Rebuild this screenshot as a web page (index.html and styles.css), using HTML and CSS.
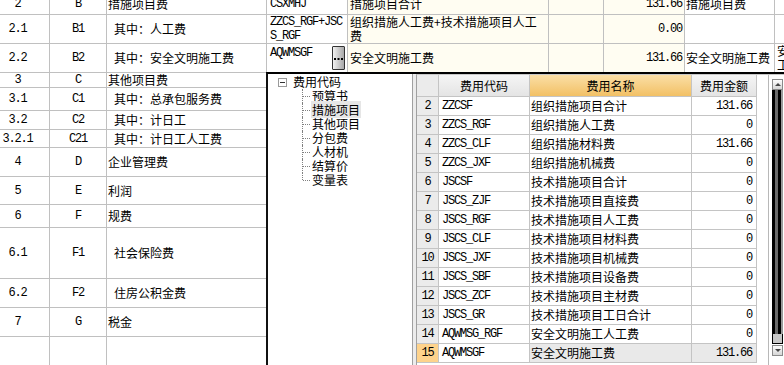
FILE: index.html
```html
<!DOCTYPE html>
<html lang="zh-CN">
<head>
<meta charset="utf-8">
<title>费用汇总</title>
<link rel="stylesheet" href="styles.css">
</head>
<body>
<div class="sheet">
  <div class="row h22">
    <div class="c ctr m">2</div><div class="c ctr m">B</div><div class="c">措施项目费</div>
    <div class="c m">CSXMHJ</div><div class="c cream">措施项目合计</div><div class="c cream"></div><div class="c cream num m">131.66</div><div class="c">措施项目费</div><div class="c"></div>
  </div>
  <div class="row h29">
    <div class="c ctr m">2.1</div><div class="c ctr m">B1</div><div class="c ind">其中：人工费</div>
    <div class="c m">ZZCS_RGF+JSC<br>S_RGF</div><div class="c cream">组织措施人工费+技术措施项目人工<br>费</div><div class="c cream"></div><div class="c cream num m">0.00</div><div class="c"></div><div class="c"></div>
  </div>
  <div class="row h29">
    <div class="c ctr m">2.2</div><div class="c ctr m">B2</div><div class="c ind">其中：安全文明施工费</div>
    <div class="c edit"><span class="m">AQWMSGF</span><span class="dots"><svg width="9" height="3" viewBox="0 0 9 3"><rect x="0" y="0" width="2" height="2" fill="#000"/><rect x="3.5" y="0" width="2" height="2" fill="#000"/><rect x="7" y="0" width="2" height="2" fill="#000"/></svg></span></div><div class="c cream">安全文明施工费</div><div class="c cream"></div><div class="c cream num m">131.66</div><div class="c">安全文明施工费</div><div class="c wrap">安全文明施工费</div>
  </div>
  <div class="row h15">
    <div class="c ctr m">3</div><div class="c ctr m">C</div><div class="c">其他项目费</div>
    <div class="c"></div><div class="c"></div><div class="c"></div><div class="c"></div><div class="c"></div><div class="c"></div>
  </div>
  <div class="row h23">
    <div class="c ctr m">3.1</div><div class="c ctr m">C1</div><div class="c ind">其中：总承包服务费</div>
    <div class="c"></div><div class="c"></div><div class="c"></div><div class="c"></div><div class="c"></div><div class="c"></div>
  </div>
  <div class="row h19">
    <div class="c ctr m">3.2</div><div class="c ctr m">C2</div><div class="c ind">其中：计日工</div>
    <div class="c"></div><div class="c"></div><div class="c"></div><div class="c"></div><div class="c"></div><div class="c"></div>
  </div>
  <div class="row h18">
    <div class="c ctr m">3.2.1</div><div class="c ctr m">C21</div><div class="c ind">其中：计日工人工费</div>
    <div class="c"></div><div class="c"></div><div class="c"></div><div class="c"></div><div class="c"></div><div class="c"></div>
  </div>
  <div class="row h29">
    <div class="c ctr m">4</div><div class="c ctr m">D</div><div class="c">企业管理费</div>
    <div class="c"></div><div class="c"></div><div class="c"></div><div class="c"></div><div class="c"></div><div class="c"></div>
  </div>
  <div class="row h28">
    <div class="c ctr m">5</div><div class="c ctr m">E</div><div class="c">利润</div>
    <div class="c"></div><div class="c"></div><div class="c"></div><div class="c"></div><div class="c"></div><div class="c"></div>
  </div>
  <div class="row h23">
    <div class="c ctr m">6</div><div class="c ctr m">F</div><div class="c">规费</div>
    <div class="c"></div><div class="c"></div><div class="c"></div><div class="c"></div><div class="c"></div><div class="c"></div>
  </div>
  <div class="row h51">
    <div class="c ctr m">6.1</div><div class="c ctr m">F1</div><div class="c ind">社会保险费</div>
    <div class="c"></div><div class="c"></div><div class="c"></div><div class="c"></div><div class="c"></div><div class="c"></div>
  </div>
  <div class="row h29">
    <div class="c ctr m">6.2</div><div class="c ctr m">F2</div><div class="c ind">住房公积金费</div>
    <div class="c"></div><div class="c"></div><div class="c"></div><div class="c"></div><div class="c"></div><div class="c"></div>
  </div>
  <div class="row h29">
    <div class="c ctr m">7</div><div class="c ctr m">G</div><div class="c">税金</div>
    <div class="c"></div><div class="c"></div><div class="c"></div><div class="c"></div><div class="c"></div><div class="c"></div>
  </div>
  <div class="row h70">
    <div class="c ctr m">8</div><div class="c ctr m">H</div><div class="c ind">工程造价</div>
    <div class="c"></div><div class="c"></div><div class="c"></div><div class="c"></div><div class="c"></div><div class="c"></div>
  </div>
</div>

<div class="popup">
  <div class="tree">
    <div class="root"><span class="minus"></span><span>费用代码</span></div>
    <ul class="kids">
      <li><span>预算书</span></li>
      <li class="sel"><span>措施项目</span></li>
      <li><span>其他项目</span></li>
      <li><span>分包费</span></li>
      <li><span>人材机</span></li>
      <li><span>结算价</span></li>
      <li><span>变量表</span></li>
    </ul>
  </div>
  <div class="gridwrap">
    <div class="grid">
      <div class="gr head"><div class="g rn"></div><div class="g hg">费用代码</div><div class="g ho">费用名称</div><div class="g hg">费用金额</div></div>
      <div class="gr"><div class="g rn m">2</div><div class="g cd m">ZZCSF</div><div class="g nm">组织措施项目合计</div><div class="g am m">131.66</div></div>
      <div class="gr"><div class="g rn m">3</div><div class="g cd m">ZZCS_RGF</div><div class="g nm">组织措施人工费</div><div class="g am m">0</div></div>
      <div class="gr"><div class="g rn m">4</div><div class="g cd m">ZZCS_CLF</div><div class="g nm">组织措施材料费</div><div class="g am m">131.66</div></div>
      <div class="gr"><div class="g rn m">5</div><div class="g cd m">ZZCS_JXF</div><div class="g nm">组织措施机械费</div><div class="g am m">0</div></div>
      <div class="gr"><div class="g rn m">6</div><div class="g cd m">JSCSF</div><div class="g nm">技术措施项目合计</div><div class="g am m">0</div></div>
      <div class="gr"><div class="g rn m">7</div><div class="g cd m">JSCS_ZJF</div><div class="g nm">技术措施项目直接费</div><div class="g am m">0</div></div>
      <div class="gr"><div class="g rn m">8</div><div class="g cd m">JSCS_RGF</div><div class="g nm">技术措施项目人工费</div><div class="g am m">0</div></div>
      <div class="gr"><div class="g rn m">9</div><div class="g cd m">JSCS_CLF</div><div class="g nm">技术措施项目材料费</div><div class="g am m">0</div></div>
      <div class="gr"><div class="g rn m">10</div><div class="g cd m">JSCS_JXF</div><div class="g nm">技术措施项目机械费</div><div class="g am m">0</div></div>
      <div class="gr"><div class="g rn m">11</div><div class="g cd m">JSCS_SBF</div><div class="g nm">技术措施项目设备费</div><div class="g am m">0</div></div>
      <div class="gr"><div class="g rn m">12</div><div class="g cd m">JSCS_ZCF</div><div class="g nm">技术措施项目主材费</div><div class="g am m">0</div></div>
      <div class="gr"><div class="g rn m">13</div><div class="g cd m">JSCS_GR</div><div class="g nm">技术措施项目工日合计</div><div class="g am m">0</div></div>
      <div class="gr"><div class="g rn m">14</div><div class="g cd m">AQWMSG_RGF</div><div class="g nm">安全文明施工人工费</div><div class="g am m">0</div></div>
      <div class="gr cur"><div class="g rn m">15</div><div class="g cd m">AQWMSGF</div><div class="g nm">安全文明施工费</div><div class="g am m">131.66</div></div>
    </div>
    <div class="sb">
      <div class="sb-btn"><span class="up"></span></div>
      <div class="sb-thumb"></div>
      <div class="sb-end"></div>
      <div class="sb-btn"><span class="down"></span></div>
    </div>
  </div>
</div>
</body>
</html>
```

FILE: styles.css
```css
* { box-sizing: border-box; }
html, body { margin: 0; padding: 0; }
body {
  width: 784px;
  height: 365px;
  overflow: hidden;
  position: relative;
  background: #fff;
  color: #000;
  font-family: "Noto Sans CJK SC", "Noto Sans", sans-serif;
  font-size: 12px;
  line-height: 14px;
}

/* background spreadsheet */
.sheet { margin-left: -14px; margin-top: -7px; }
.row {
  display: grid;
  grid-template-columns: 64px 57px 160px 81px 201px 55px 81px 90px 80px;
}
.h15 { height: 15px; }
.h18 { height: 18px; }
.h19 { height: 19px; }
.h22 { height: 22px; }
.h23 { height: 23px; }
.h28 { height: 28px; }
.h29 { height: 29px; }
.h51 { height: 51px; }
.h70 { height: 70px; }

.c {
  border-right: 1px solid #c0c0c0;
  border-bottom: 1px solid #c0c0c0;
  display: flex;
  align-items: center;
  overflow: hidden;
  white-space: nowrap;
  padding: 0 2px 0 1px;
}
.ctr { justify-content: center; padding: 0; }
.ind { padding-left: 7px; }
.cream { background: #fffdf2; }
.num { justify-content: flex-end; padding-right: 2px; }
.wrap { white-space: normal; align-items: center; padding-left: 2px; padding-right: 6px; }
.m {
  font-family: "Liberation Mono", "DejaVu Sans Mono", monospace;
  font-size: 12px;
  letter-spacing: -1.2px;
}
.row .c:nth-child(4) { padding-left: 3px; }
.row .c:nth-child(5) { padding-left: 2px; }

.edit {
  align-items: flex-start;
  justify-content: space-between;
  padding: 2px 2px 2px 3px;
}
.dots {
  width: 13px;
  align-self: stretch;
  border: 1px solid #333;
  border-radius: 1px;
  background: linear-gradient(to right, #f2f2f2, #c4c4c4 60%, #a8a8a8);
  display: flex;
  align-items: center;
  justify-content: center;
  padding-top: 3px;
}
.dots svg { display: block; }

/* dropdown popup */
.popup {
  position: absolute;
  left: 266px;
  top: 72px;
  width: 518px;
  height: 300px;
  border-top: 2px solid #000;
  border-left: 2px solid #111;
  background: #ececec;
  display: flex;
}
.tree {
  width: 145px;
  background: #fff;
  border-right: 1px solid #a0a0a0;
  padding-top: 1px;
  margin-right: 3px;
}
.root {
  display: flex;
  align-items: center;
  height: 14px;
  padding-left: 10px;
}
.minus {
  width: 9px;
  height: 9px;
  border: 1px solid #9a9a9a;
  background: #fff;
  position: relative;
  margin-right: 6px;
}
.minus::after {
  content: "";
  position: absolute;
  left: 1px;
  right: 1px;
  top: 3px;
  height: 1px;
  background: #333;
}
.kids {
  list-style: none;
  margin: 0 0 0 34px;
  padding: 0;
}
.kids li {
  position: relative;
  height: 14px;
  padding-left: 9px;
}
.kids li::before {
  content: "";
  position: absolute;
  left: 0;
  top: 0;
  bottom: 0;
  border-left: 1px dotted #808080;
}
.kids li:last-child::before { bottom: 7px; }
.kids li::after {
  content: "";
  position: absolute;
  left: 1px;
  width: 7px;
  top: 7px;
  border-top: 1px dotted #808080;
}
.kids li span { padding: 0 1px; }
.kids li.sel span { background: #e6e6e6; }

.gridwrap {
  flex: 1;
  display: flex;
  background: #fff;
  border-left: 1px solid #a0a0a0;
  border-top: 1px solid #c8c8c8;
}
.grid { width: 351px; }
.gr {
  display: grid;
  grid-template-columns: 22px 91px 162px 65px;
  height: 19px;
}
.gr.head { height: 22px; }
.g {
  border-right: 1px solid #c4c4c4;
  border-bottom: 1px solid #c4c4c4;
  display: flex;
  align-items: center;
  white-space: nowrap;
  overflow: hidden;
}
.rn { background: #ebebeb; justify-content: center; }
.cd { padding-left: 3px; }
.nm { padding-left: 1px; }
.am { justify-content: flex-end; padding-right: 4px; }
.hg { background: linear-gradient(#f5f5f5, #e4e4e4); justify-content: center; }
.ho { background: linear-gradient(#fbdfa6, #f2c065); justify-content: center; }
.cur .rn { background: #fed38c; }
.cur .nm, .cur .am { background: #e9e9e9; }

.sb {
  width: 16px;
  margin-left: auto;
  border-left: 1px solid #b8b8b8;
  padding: 4px 1px 0 3px;
  display: flex;
  flex-direction: column;
  background: #fff;
}
.sb-btn {
  height: 11px;
  border: 1px solid #8a8a8a;
  background: linear-gradient(#fdfdfd, #d6d6d6);
  display: flex;
  align-items: center;
  justify-content: center;
}
.up, .down {
  width: 0;
  height: 0;
  border-left: 3px solid transparent;
  border-right: 3px solid transparent;
}
.up { border-bottom: 3px solid #444; }
.down { border-top: 3px solid #444; }
.sb-thumb {
  height: 244px;
  background: linear-gradient(to right, #000 0 3px, #6a6a6a 3px 6px, #000 6px 9px, #9a9a9a 9px);
}
.sb-end {
  height: 10px;
  background: linear-gradient(to right, #000 0 1px, #c8c8c8 1px 10px, #000 10px);
  border-bottom: 1px solid #000;
  margin-bottom: 1px;
}
```
